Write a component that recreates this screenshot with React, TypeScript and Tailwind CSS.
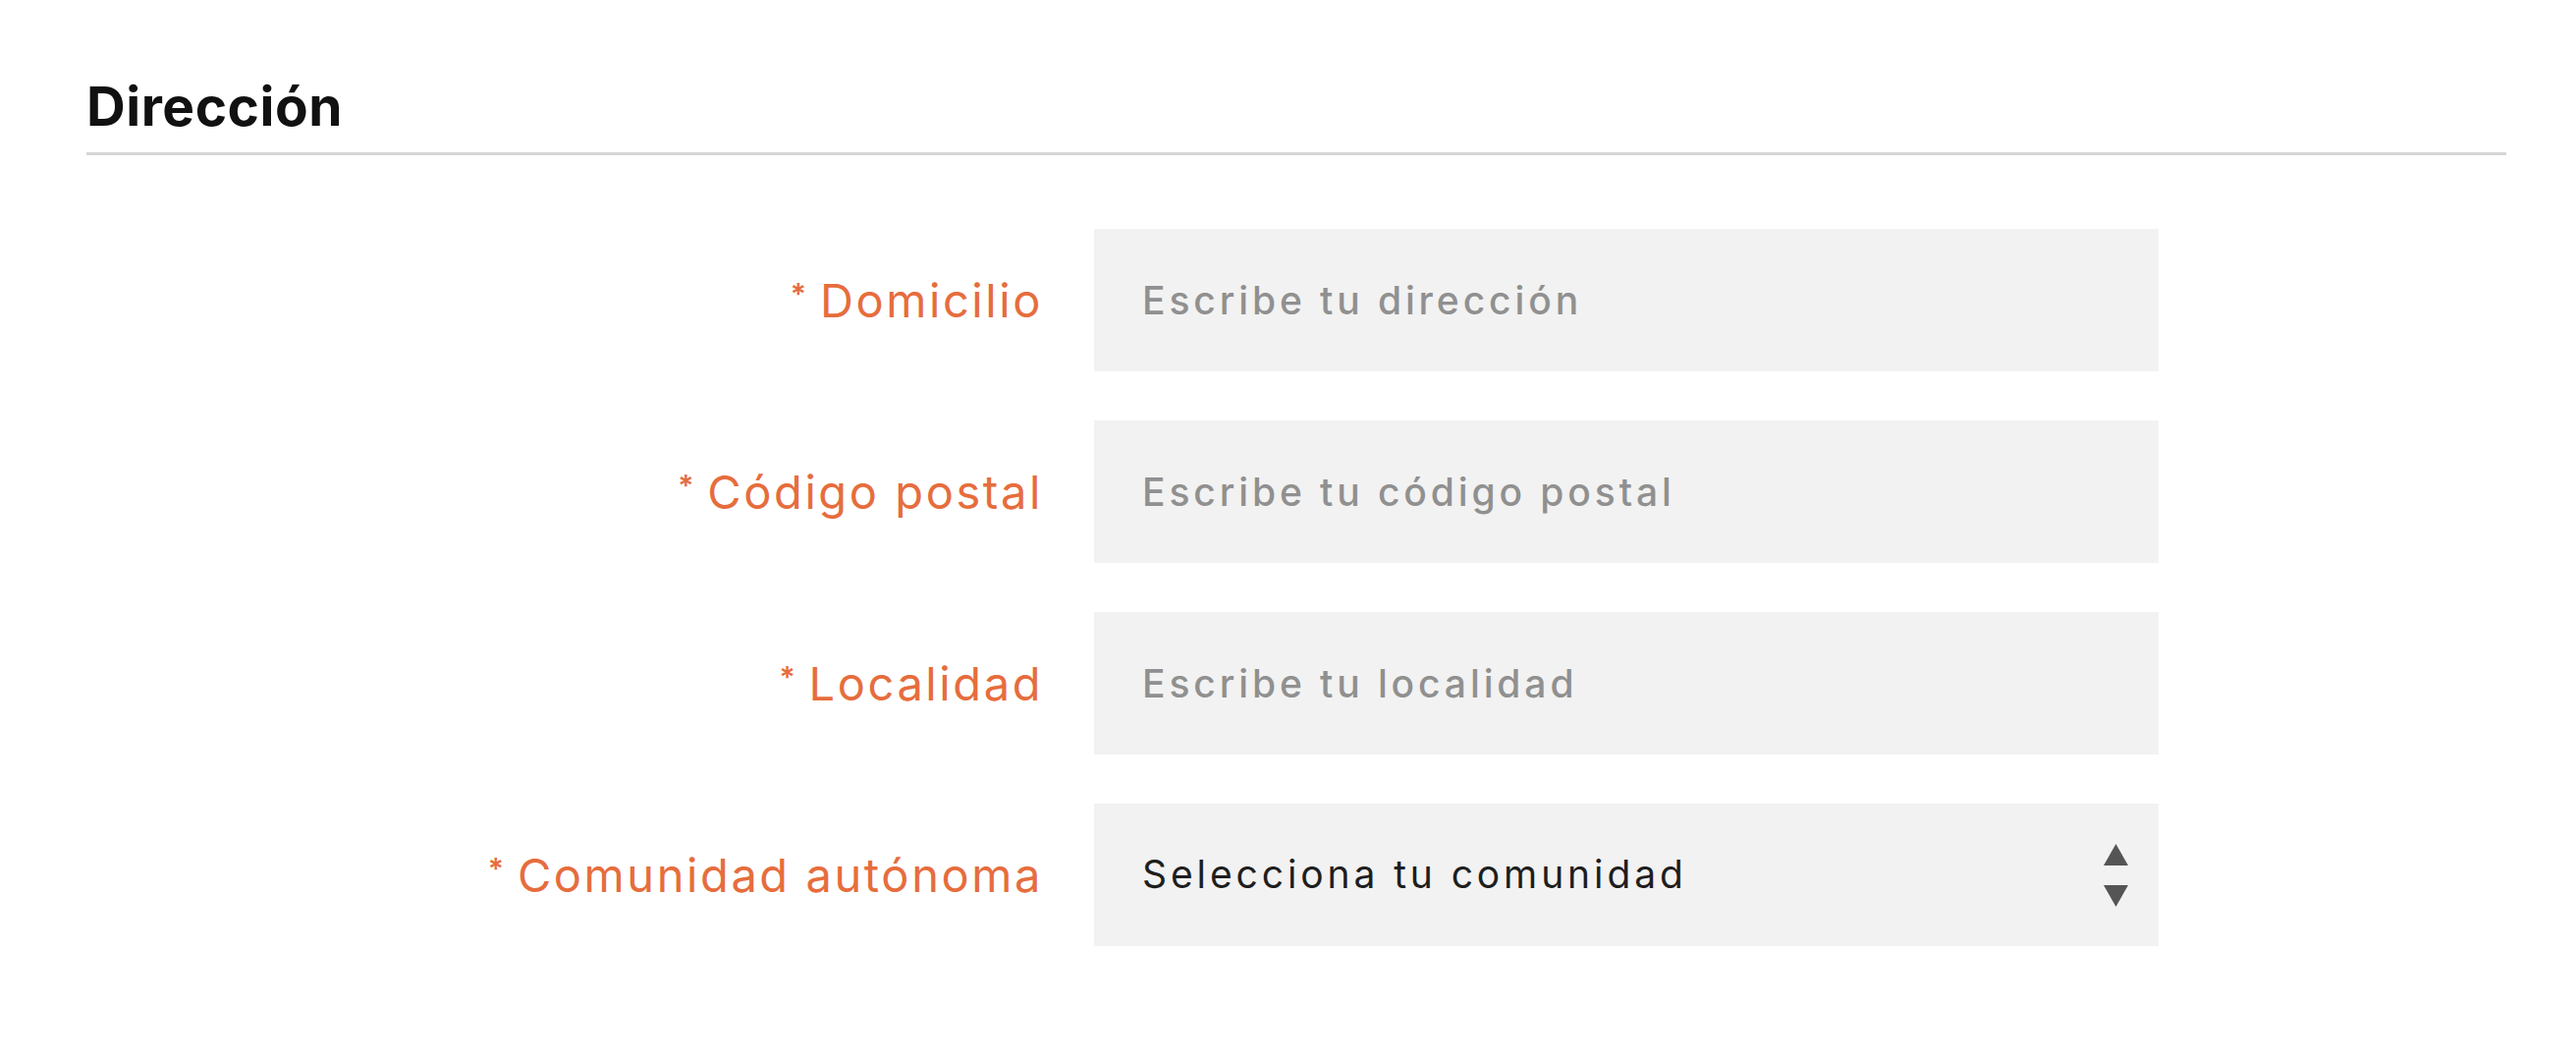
import React from "react";

const fields = [
  { label: "Domicilio", placeholder: "Escribe tu dirección" },
  { label: "Código postal", placeholder: "Escribe tu código postal" },
  { label: "Localidad", placeholder: "Escribe tu localidad" },
];

function Label({ text }: { text: string }) {
  return (
    <label className="flex items-center justify-end text-[#e66d3d]">
      <span className="inline-flex items-start">
        <span className="mt-[2px] mr-[14px] text-[30px] font-semibold leading-none">*</span>
        <span className="text-[47px] leading-none tracking-[0.055em]">{text}</span>
      </span>
    </label>
  );
}

export default function App() {
  return (
    <div className="min-h-screen w-full bg-white font-['Inter',sans-serif]">
      <div className="pl-[88px] pr-[71px] pt-[81px]">
        <h2 className="text-[55px] font-bold leading-none tracking-[0.01em] text-[#111111] pb-[19px] border-b-[3px] border-[#d6d6d6]">
          Dirección
        </h2>
        <form className="mt-[75px] grid grid-cols-[974px_1084px] gap-x-[52px] gap-y-[50px]">
          {fields.map((f) => (
            <React.Fragment key={f.label}>
              <Label text={f.label} />
              <input
                type="text"
                placeholder={f.placeholder}
                className="h-[145px] w-full bg-[#f2f2f2] pl-[49px] text-[39px] font-medium tracking-[0.1em] text-[#333] placeholder:text-[#909090] outline-none"
              />
            </React.Fragment>
          ))}
          <Label text="Comunidad autónoma" />
          <div className="relative h-[145px] w-full bg-[#f2f2f2]">
            <select className="h-full w-full appearance-none bg-transparent pl-[49px] text-[39px] tracking-[0.1em] text-[#1e1e1e] outline-none">
              <option>Selecciona tu comunidad</option>
            </select>
            <div className="pointer-events-none absolute right-[31px] top-1/2 -translate-y-1/2 flex flex-col items-center gap-[20px]">
              <svg width="25" height="22" viewBox="0 0 25 22">
                <path d="M12.5 0 L25 22 L0 22 Z" fill="#555" />
              </svg>
              <svg width="25" height="22" viewBox="0 0 25 22">
                <path d="M0 0 L25 0 L12.5 22 Z" fill="#555" />
              </svg>
            </div>
          </div>
        </form>
      </div>
    </div>
  );
}
